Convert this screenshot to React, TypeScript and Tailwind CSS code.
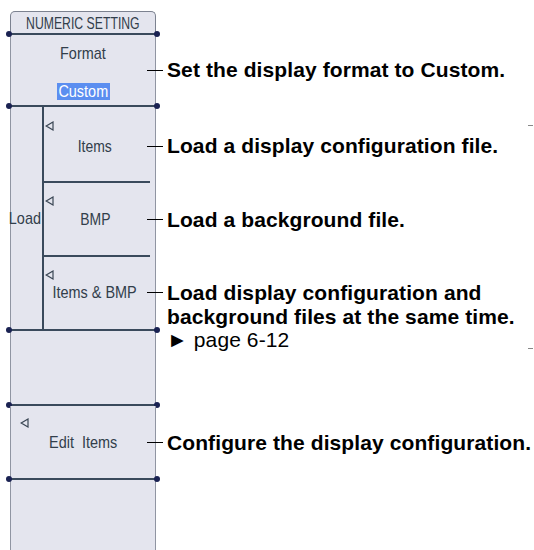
import React from "react";

const PANEL_TEXT = "text-[#323e4b] text-[17px] leading-none whitespace-pre inline-block";

function Tri() {
  return (
    <svg width="9" height="10" viewBox="0 0 9 10" className="block">
      <path d="M8 1 L1.2 5 L8 9 Z" fill="none" stroke="#3a4654" strokeWidth="1.2" strokeLinejoin="miter" />
    </svg>
  );
}

function Dot({ side }: { side: "l" | "r" }) {
  return (
    <span
      className={
        "absolute top-[-2px] w-[6px] h-[6px] rounded-full bg-[#1a2252] " +
        (side === "l" ? "left-[-4px]" : "right-[-4px]")
      }
    />
  );
}

function Sep() {
  return (
    <div className="flex">
      <div className="relative w-[146px] h-[2px] bg-[#3a4a5c]">
        <Dot side="l" />
        <Dot side="r" />
      </div>
    </div>
  );
}

function Desc({ children, extra }: { children: React.ReactNode; extra?: React.ReactNode }) {
  return (
    <div className="relative z-10 flex flex-col">
      <div className="flex items-center">
        <div className="ml-[-9px] w-[16px] h-[1px] bg-black" />
        <div className="ml-[4px] text-[21px] leading-[23.5px] font-bold text-black whitespace-nowrap tracking-[0.1px]">
          {children}
        </div>
      </div>
      {extra}
    </div>
  );
}

function Cell({ className = "", children }: { className?: string; children?: React.ReactNode }) {
  return (
    <div className={"w-[146px] shrink-0 border-x border-[#9095a2] bg-[#e4e5ee] " + className}>{children}</div>
  );
}

export default function App() {
  return (
    <div
      className="relative w-[534px] h-[550px] overflow-hidden bg-white pt-[11px] pl-[10px]"
      style={{ fontFamily: '"Liberation Sans", Arial, sans-serif' }}
    >
      {/* Header */}
      <div className="flex">
        <div className="w-[146px] h-[22px] rounded-t-[5px] border-x border-t border-[#7c8290] bg-[#e4e5ee] flex items-center justify-center overflow-hidden">
          <span className={PANEL_TEXT + " scale-x-[0.72] mt-[1px]"}>NUMERIC SETTING</span>
        </div>
      </div>
      <Sep />

      {/* Format */}
      <div className="flex h-[70px]">
        <Cell className="flex flex-col items-center pt-[10px]">
          <span className={PANEL_TEXT + " scale-x-[0.85]"}>Format</span>
          <span className="mt-[21px] bg-[#5b8ef0] text-white text-[17px] leading-none py-[0px] w-[53px] h-[17px] flex items-center justify-center">
            <span className="inline-block scale-x-[0.85]">Custom</span>
          </span>
        </Cell>
        <div className="flex items-center">
          <Desc>Set the display format to Custom.</Desc>
        </div>
      </div>
      <Sep />

      {/* Load group */}
      <div className="flex h-[222px]">
        <Cell className="flex">
          <div className="w-[31px] flex items-center justify-center">
            <span className={PANEL_TEXT + " scale-x-[0.85] ml-[-3px]"}>Load</span>
          </div>
          <div className="w-[2px] bg-[#3a4a5c]" />
          <div className="flex-1 flex flex-col">
            <div className="h-[74px] relative flex items-center justify-center pr-[9px]">
              <div className="absolute left-[1px] top-[14px]"><Tri /></div>
              <span className={PANEL_TEXT + " scale-x-[0.82] mt-[4px]"}>Items</span>
            </div>
            <div className="h-[2px] w-[106px] bg-[#3a4a5c]" />
            <div className="h-[72px] relative flex items-center justify-center pr-[9px]">
              <div className="absolute left-[1px] top-[13px]"><Tri /></div>
              <span className={PANEL_TEXT + " scale-x-[0.82] mt-[1px]"}>BMP</span>
            </div>
            <div className="h-[2px] w-[106px] bg-[#3a4a5c]" />
            <div className="h-[72px] relative flex items-center justify-center pr-[9px]">
              <div className="absolute left-[1px] top-[13px]"><Tri /></div>
              <span className={PANEL_TEXT + " scale-x-[0.85] mt-[-2px]"}>Items &amp; BMP</span>
            </div>
          </div>
        </Cell>
        <div className="flex flex-col">
          <div className="h-[74px] flex items-center pt-[4px]">
            <Desc>Load a display configuration file.</Desc>
          </div>
          <div className="h-[2px]" />
          <div className="h-[72px] flex items-center pt-[1px]">
            <Desc>Load a background file.</Desc>
          </div>
          <div className="h-[2px]" />
          <div className="h-[72px] flex items-start pt-[24px]">
            <Desc
              extra={
                <div className="ml-[11px] text-[21px] leading-[23.5px] font-bold text-black whitespace-nowrap tracking-[0.1px]">
                  background files at the same time.
                  <div className="font-normal">► page 6-12</div>
                </div>
              }
            >
              Load display configuration and
            </Desc>
          </div>
        </div>
      </div>
      <Sep />

      {/* Blank */}
      <div className="flex h-[73px]">
        <Cell />
      </div>
      <Sep />

      {/* Edit Items */}
      <div className="flex h-[72px]">
        <Cell className="relative flex items-center justify-center">
          <div className="absolute left-[9px] top-[12px]"><Tri /></div>
          <span className={PANEL_TEXT + " scale-x-[0.85] mt-[1px]"}>Edit  Items</span>
        </Cell>
        <div className="flex items-center pt-[1px]">
          <Desc>Configure the display configuration.</Desc>
        </div>
      </div>
      <Sep />

      {/* Blank bottom */}
      <div className="flex h-[80px]">
        <Cell />
      </div>

      {/* right edge ticks */}
      <div className="absolute right-[1px] top-[125px] w-[5px] h-[1px] bg-[#888]" />
      <div className="absolute right-[1px] top-[348px] w-[5px] h-[1px] bg-[#888]" />
    </div>
  );
}
